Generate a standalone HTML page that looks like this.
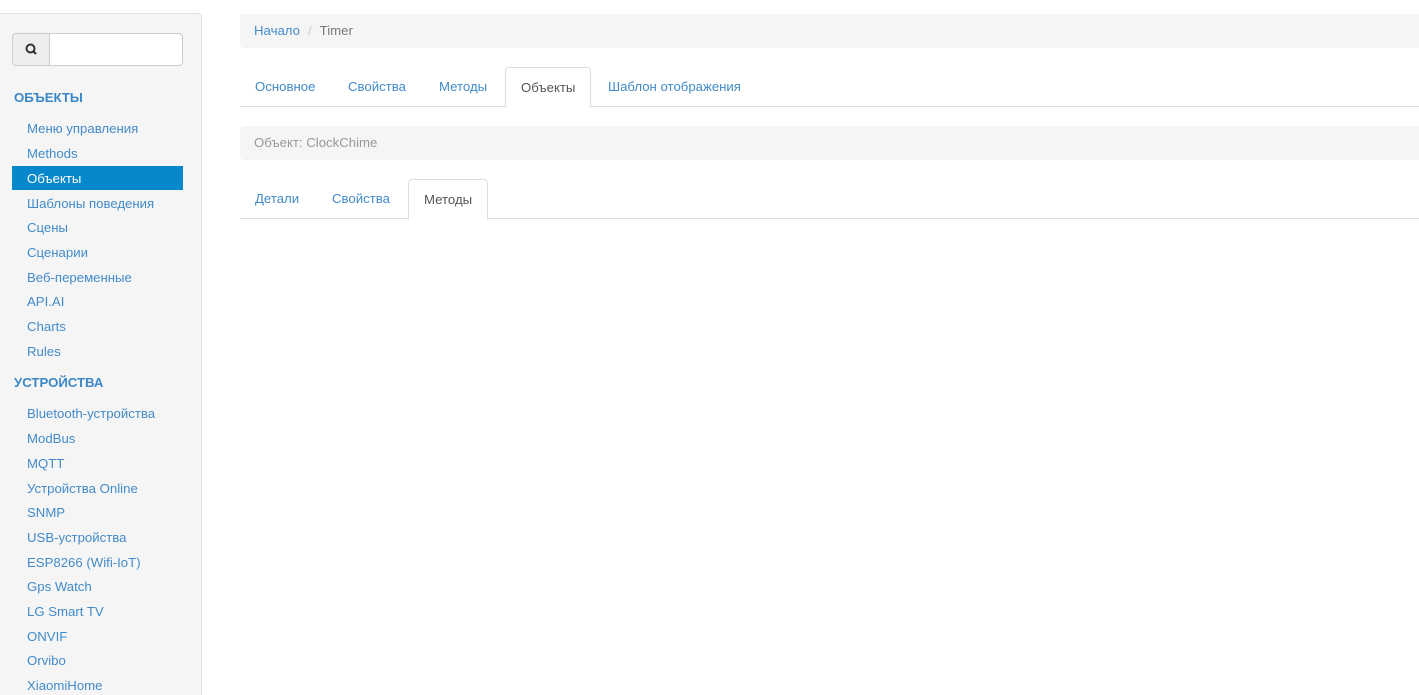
<!DOCTYPE html>
<html><head><meta charset="utf-8"><style>
*{box-sizing:border-box;margin:0;padding:0}
html,body{width:1419px;height:695px;overflow:hidden}
body{background:#fff;font-family:"Liberation Sans",Arial,sans-serif;font-size:13.2px;color:#333;position:relative}
.side{position:absolute;left:0;top:13px;width:202px;height:690px;background:#f5f5f5;border:1px solid #e3e3e3;border-left:none;border-radius:0 4px 0 0}
.search{position:absolute;left:12px;top:19px;width:171px;height:33px}
.sbtn{position:absolute;left:0;top:0;width:38px;height:33px;background:#eee;border:1px solid #ccc;border-radius:4px 0 0 4px}
.sinp{position:absolute;left:37px;top:0;width:134px;height:33px;background:#fff;border:1px solid #ccc;border-radius:0 4px 4px 0}
.hd{position:absolute;left:14px;font-weight:bold;color:#3a87c8;font-size:13.2px}
.it{position:absolute;left:12px;width:171px;height:24px;line-height:26px;padding-left:15px;color:#428bca}
.it.a{background:#0688cc;color:#fff}
.bc{position:absolute;left:240px;width:1190px;height:34px;background:#f5f5f5;border-radius:4px;line-height:34px;padding-left:14px}
.tabs{position:absolute;left:240px;width:1190px;height:40px;border-bottom:1px solid #ddd}
.tabs span{position:absolute;top:0;height:40px;line-height:39px;color:#428bca}
.tabs span.a{background:#fff;border:1px solid #ddd;border-bottom-color:#fff;border-radius:4px 4px 0 0;color:#555;height:41px;padding:0 15px}
</style></head><body>
<div class="side">
<div class="search" style="top:19px"><div class="sbtn"><svg width="36" height="31" viewBox="0 0 36 31"><circle cx="17.5" cy="14.5" r="4" fill="none" stroke="#333" stroke-width="2"/><line x1="20.5" y1="17.5" x2="23" y2="20" stroke="#333" stroke-width="2.2"/></svg></div><div class="sinp"></div></div>
</div>
<div class="hd" style="top:90px">ОБЪЕКТЫ</div>
<div class="it" style="top:116px">Меню управления</div>
<div class="it" style="top:141px">Methods</div>
<div class="it a" style="top:166px">Объекты</div>
<div class="it" style="top:191px">Шаблоны поведения</div>
<div class="it" style="top:215px">Сцены</div>
<div class="it" style="top:240px">Сценарии</div>
<div class="it" style="top:265px">Веб-переменные</div>
<div class="it" style="top:289px">API.AI</div>
<div class="it" style="top:314px">Charts</div>
<div class="it" style="top:339px">Rules</div>
<div class="hd" style="top:375px">УСТРОЙСТВА</div>
<div class="it" style="top:401px">Bluetooth-устройства</div>
<div class="it" style="top:426px">ModBus</div>
<div class="it" style="top:451px">MQTT</div>
<div class="it" style="top:476px">Устройства Online</div>
<div class="it" style="top:500px">SNMP</div>
<div class="it" style="top:525px">USB-устройства</div>
<div class="it" style="top:550px">ESP8266 (Wifi-IoT)</div>
<div class="it" style="top:574px">Gps Watch</div>
<div class="it" style="top:599px">LG Smart TV</div>
<div class="it" style="top:624px">ONVIF</div>
<div class="it" style="top:648px">Orvibo</div>
<div class="it" style="top:673px">XiaomiHome</div>

<div class="bc" style="top:14px"><span style="color:#428bca">Начало</span><span style="color:#ccc;padding:0 8px">/</span><span style="color:#777">Timer</span></div>
<div class="tabs" style="top:67px">
<span style="left:15px">Основное</span><span style="left:108px">Свойства</span><span style="left:199px">Методы</span><span class="a" style="left:265px">Объекты</span><span style="left:368px">Шаблон отображения</span>
</div>
<div class="bc" style="top:126px;color:#999">Объект: ClockChime</div>
<div class="tabs" style="top:179px">
<span style="left:15px">Детали</span><span style="left:92px">Свойства</span><span class="a" style="left:168px">Методы</span>
</div>
</body></html>
